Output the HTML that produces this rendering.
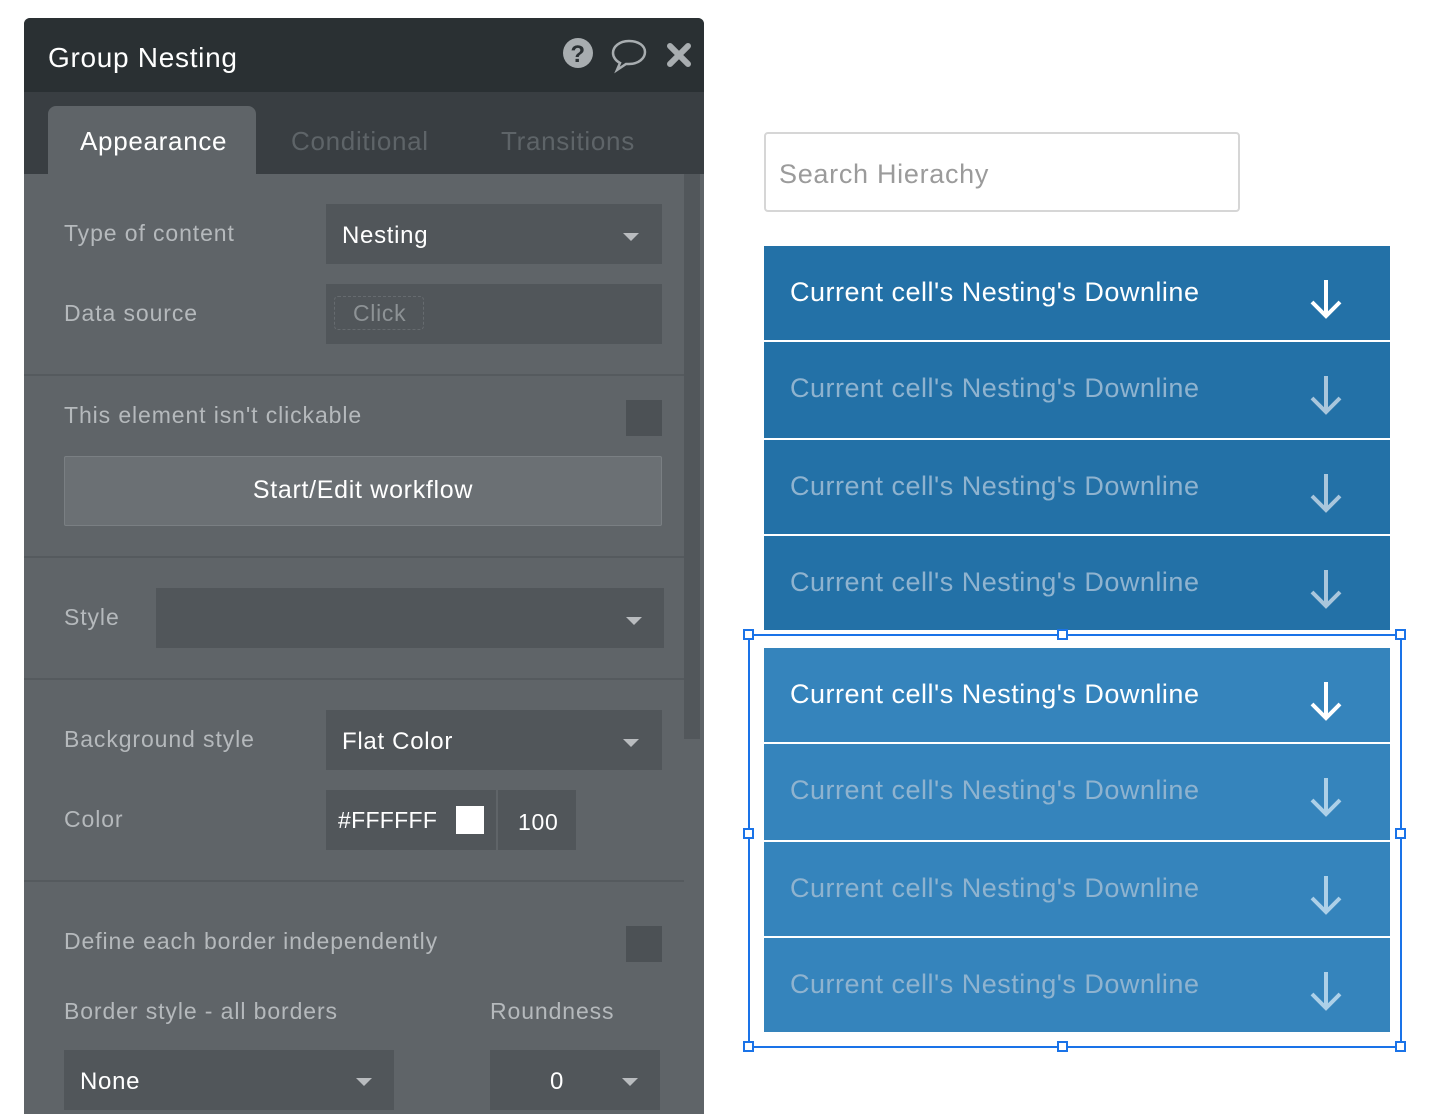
<!DOCTYPE html>
<html><head><style>
*{margin:0;padding:0;box-sizing:border-box}
body{width:1452px;height:1114px;background:#fff;position:relative;overflow:hidden;font-family:"Liberation Sans",sans-serif;letter-spacing:0.7px}
.a{position:absolute}
.lbl{position:absolute;color:#b5b9bc;font-size:23px;letter-spacing:0.9px}
.box{position:absolute;background:#51565a}
.tri{position:absolute;width:0;height:0;border-left:8px solid transparent;border-right:8px solid transparent;border-top:8px solid #b9bcbf}
.sep{position:absolute;left:24px;width:660px;height:2px;background:#555a5e}
.row{position:absolute;left:764px;width:626px;height:94px;background:#2371a7}
.row.b{background:#3584bc}
.row span{position:absolute;left:26px;top:31px;font-size:27px;color:#fff;letter-spacing:0.5px}
.row.f span{color:#8fb3cf}
.row svg{position:absolute;left:544px;top:32px}
.h{position:absolute;width:11px;height:11px;border:2px solid #1a73e8;background:#fff}
</style></head><body>
<div class="a" style="left:24px;top:18px;width:680px;height:1096px;background:#5f6468;border-radius:6px 6px 0 0;overflow:hidden">
 <div class="a" style="left:0;top:0;width:680px;height:74px;background:#2a3033"></div>
 <div class="a" style="left:0;top:74px;width:680px;height:82px;background:#393e42"></div>
 <div class="a" style="left:24px;top:88px;width:208px;height:70px;background:#5f6468;border-radius:8px 8px 0 0"></div>
 <div class="a" style="left:660px;top:156px;width:16px;height:565px;background:#52575b"></div>
</div>
<div class="a" style="left:48px;top:42px;font-size:28px;color:#fff">Group Nesting</div>
<svg class="a" style="left:562px;top:38px" width="34" height="32" viewBox="0 0 34 32"><circle cx="16" cy="15" r="15" fill="#a8adb0"/><text x="16" y="24" text-anchor="middle" font-size="24" font-weight="bold" fill="#2a3033" font-family="Liberation Sans">?</text></svg>
<svg class="a" style="left:610px;top:38px" width="40" height="36" viewBox="0 0 40 36"><path d="M19 3C9 3 3 9 3 15c0 4 3 8 7 10l-3 7 9-6c1 0 2 0 3 0 10 0 16-6 16-12S29 3 19 3z" fill="none" stroke="#a8adb0" stroke-width="2.5"/></svg>
<svg class="a" style="left:666px;top:42px" width="26" height="26" viewBox="0 0 26 26"><path d="M4 4L22 22M22 4L4 22" stroke="#a8adb0" stroke-width="6" stroke-linecap="round"/></svg>
<div class="a" style="left:80px;top:126px;font-size:26px;color:#fff">Appearance</div>
<div class="a" style="left:291px;top:126px;font-size:26px;color:#5e6468">Conditional</div>
<div class="a" style="left:501px;top:126px;font-size:26px;color:#5e6468">Transitions</div>

<div class="lbl" style="left:64px;top:220px">Type of content</div>
<div class="box" style="left:326px;top:204px;width:336px;height:60px"></div>
<div class="a" style="left:342px;top:222px;font-size:24px;color:#fff">Nesting</div>
<div class="tri" style="left:623px;top:233px"></div>
<div class="lbl" style="left:64px;top:300px">Data source</div>
<div class="box" style="left:326px;top:284px;width:336px;height:60px"></div>
<div class="a" style="left:334px;top:296px;width:90px;height:34px;border:1px dashed #666b6f;border-radius:4px"></div>
<div class="a" style="left:353px;top:300px;font-size:23px;color:#8d9295">Click</div>
<div class="sep" style="top:374px"></div>
<div class="lbl" style="left:64px;top:402px">This element isn't clickable</div>
<div class="box" style="left:626px;top:400px;width:36px;height:36px;background:#4c5155"></div>
<div class="a" style="left:64px;top:456px;width:598px;height:70px;background:#6b7074;border:1px solid #7a7f83;border-radius:2px"></div>
<div class="a" style="left:64px;top:476px;width:598px;text-align:center;font-size:25px;color:#fff">Start/Edit workflow</div>
<div class="sep" style="top:556px"></div>
<div class="lbl" style="left:64px;top:604px">Style</div>
<div class="box" style="left:156px;top:588px;width:508px;height:60px"></div>
<div class="tri" style="left:626px;top:617px"></div>
<div class="sep" style="top:678px"></div>
<div class="lbl" style="left:64px;top:726px">Background style</div>
<div class="box" style="left:326px;top:710px;width:336px;height:60px"></div>
<div class="a" style="left:342px;top:728px;font-size:24px;color:#fff">Flat Color</div>
<div class="tri" style="left:623px;top:739px"></div>
<div class="lbl" style="left:64px;top:806px">Color</div>
<div class="box" style="left:326px;top:790px;width:170px;height:60px"></div>
<div class="a" style="left:338px;top:807px;font-size:23px;color:#fff;letter-spacing:0.3px">#FFFFFF</div>
<div class="a" style="left:456px;top:806px;width:28px;height:28px;background:#fff"></div>
<div class="box" style="left:498px;top:790px;width:78px;height:60px"></div>
<div class="a" style="left:518px;top:809px;font-size:23px;color:#fff">100</div>
<div class="sep" style="top:880px"></div>
<div class="lbl" style="left:64px;top:928px">Define each border independently</div>
<div class="box" style="left:626px;top:926px;width:36px;height:36px;background:#4c5155"></div>
<div class="lbl" style="left:64px;top:998px">Border style - all borders</div>
<div class="lbl" style="left:490px;top:998px">Roundness</div>
<div class="box" style="left:64px;top:1050px;width:330px;height:60px"></div>
<div class="a" style="left:80px;top:1068px;font-size:24px;color:#fff">None</div>
<div class="tri" style="left:356px;top:1078px"></div>
<div class="box" style="left:490px;top:1050px;width:170px;height:60px"></div>
<div class="a" style="left:550px;top:1068px;font-size:24px;color:#fff">0</div>
<div class="tri" style="left:622px;top:1078px"></div>

<div class="a" style="left:764px;top:132px;width:476px;height:80px;border:2px solid #d6d6d6;border-radius:4px"></div>
<div class="a" style="left:779px;top:159px;font-size:27px;color:#9b9b9b">Search Hierachy</div>

<div class="row" style="top:246px"><span>Current cell's Nesting's Downline</span><svg width="36" height="42" viewBox="0 0 36 42"><path d="M18 2V38M4 24L18 38L32 24" fill="none" stroke="#fff" stroke-width="4"/></svg></div>
<div class="row f" style="top:342px;height:96px"><span>Current cell's Nesting's Downline</span><svg width="36" height="42" viewBox="0 0 36 42"><path d="M18 2V38M4 24L18 38L32 24" fill="none" stroke="#a9c6dc" stroke-width="4"/></svg></div>
<div class="row f" style="top:440px"><span>Current cell's Nesting's Downline</span><svg width="36" height="42" viewBox="0 0 36 42"><path d="M18 2V38M4 24L18 38L32 24" fill="none" stroke="#a9c6dc" stroke-width="4"/></svg></div>
<div class="row f" style="top:536px"><span>Current cell's Nesting's Downline</span><svg width="36" height="42" viewBox="0 0 36 42"><path d="M18 2V38M4 24L18 38L32 24" fill="none" stroke="#a9c6dc" stroke-width="4"/></svg></div>

<div class="a" style="left:748px;top:634px;width:654px;height:414px;border:2px solid #1a73e8"></div>
<div class="row b" style="top:648px"><span>Current cell's Nesting's Downline</span><svg width="36" height="42" viewBox="0 0 36 42"><path d="M18 2V38M4 24L18 38L32 24" fill="none" stroke="#fff" stroke-width="4"/></svg></div>
<div class="row b f" style="top:744px;height:96px"><span>Current cell's Nesting's Downline</span><svg width="36" height="42" viewBox="0 0 36 42"><path d="M18 2V38M4 24L18 38L32 24" fill="none" stroke="#add0e8" stroke-width="4"/></svg></div>
<div class="row b f" style="top:842px"><span>Current cell's Nesting's Downline</span><svg width="36" height="42" viewBox="0 0 36 42"><path d="M18 2V38M4 24L18 38L32 24" fill="none" stroke="#add0e8" stroke-width="4"/></svg></div>
<div class="row b f" style="top:938px"><span>Current cell's Nesting's Downline</span><svg width="36" height="42" viewBox="0 0 36 42"><path d="M18 2V38M4 24L18 38L32 24" fill="none" stroke="#add0e8" stroke-width="4"/></svg></div>

<div class="h" style="left:743px;top:629px"></div>
<div class="h" style="left:1057px;top:629px"></div>
<div class="h" style="left:1395px;top:629px"></div>
<div class="h" style="left:743px;top:828px"></div>
<div class="h" style="left:1395px;top:828px"></div>
<div class="h" style="left:743px;top:1041px"></div>
<div class="h" style="left:1057px;top:1041px"></div>
<div class="h" style="left:1395px;top:1041px"></div>
</body></html>
